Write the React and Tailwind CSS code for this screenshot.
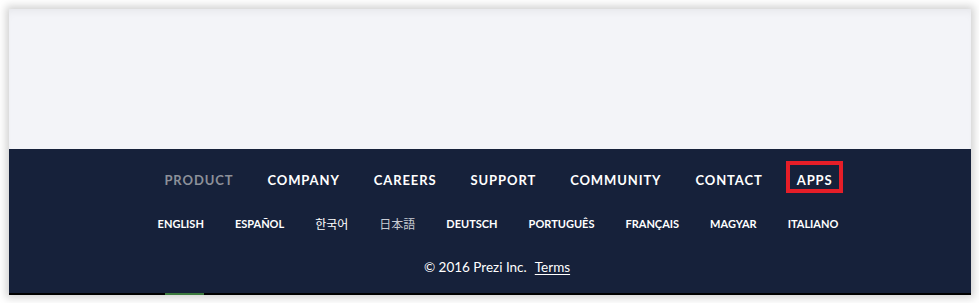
const NAV = ['PRODUCT', 'COMPANY', 'CAREERS', 'SUPPORT', 'COMMUNITY', 'CONTACT', 'APPS'];
const LANGS = ['ENGLISH', 'ESPAÑOL', '한국어', '日本語', 'DEUTSCH', 'PORTUGUÊS', 'FRANÇAIS', 'MAGYAR', 'ITALIANO'];

export default function App() {
  return (
    <div className="min-h-[303px] w-[979px] bg-white pt-[9px] pl-[9px]">
      <div className="w-[962px] shadow-[0_0_8px_3px_rgba(0,0,0,0.18)]">
        <div className="h-[140px] bg-[#f3f4f8] shadow-[inset_0_6px_8px_-4px_rgba(0,0,0,0.06)]" />
        <footer
          className="relative flex h-[146px] flex-col items-center border-b-2 border-black bg-[#16213a] pt-[12px]"
          style={{ fontFamily: 'Lato, "Open Sans", Arial, sans-serif' }}
        >
          <nav className="flex items-center gap-[13px] pl-[17px]">
            {NAV.map((item) => (
              <a
                key={item}
                className={`border-[4px] px-[6.5px] pt-[8px] pb-[2px] text-[13px] font-bold leading-[14px] tracking-[0.9px] ${
                  item === 'APPS' ? 'border-[#e61e28]' : 'border-transparent'
                } ${item === 'PRODUCT' ? 'text-[#8c9099]' : 'text-white'}`}
              >
                {item}
              </a>
            ))}
          </nav>
          <ul className="mt-[24px] flex items-center gap-[31px] pl-[16px] text-[11px] leading-[14px]">
            {LANGS.map((l) => (
              <li
                key={l}
                className={
                  l === '한국어'
                    ? 'font-normal text-white'
                    : l === '日本語'
                      ? 'font-normal text-[#c8ccd4]'
                      : 'font-bold text-white'
                }
                style={
                  l === '한국어' || l === '日本語'
                    ? { fontFamily: '"Noto Sans CJK KR", "Noto Sans CJK JP", sans-serif', fontSize: 12 }
                    : undefined
                }
              >
                {l}
              </li>
            ))}
          </ul>
          <p className="mt-[28px] pl-[14px] text-[13.5px] leading-[16px] text-white">
            © 2016 Prezi Inc.
            <a className="ml-[8px] underline underline-offset-2">Terms</a>
          </p>
          <span className="absolute bottom-[-2px] left-[156px] h-[2px] w-[39px] bg-[#3c7a3e]" />
        </footer>
      </div>
    </div>
  );
}
